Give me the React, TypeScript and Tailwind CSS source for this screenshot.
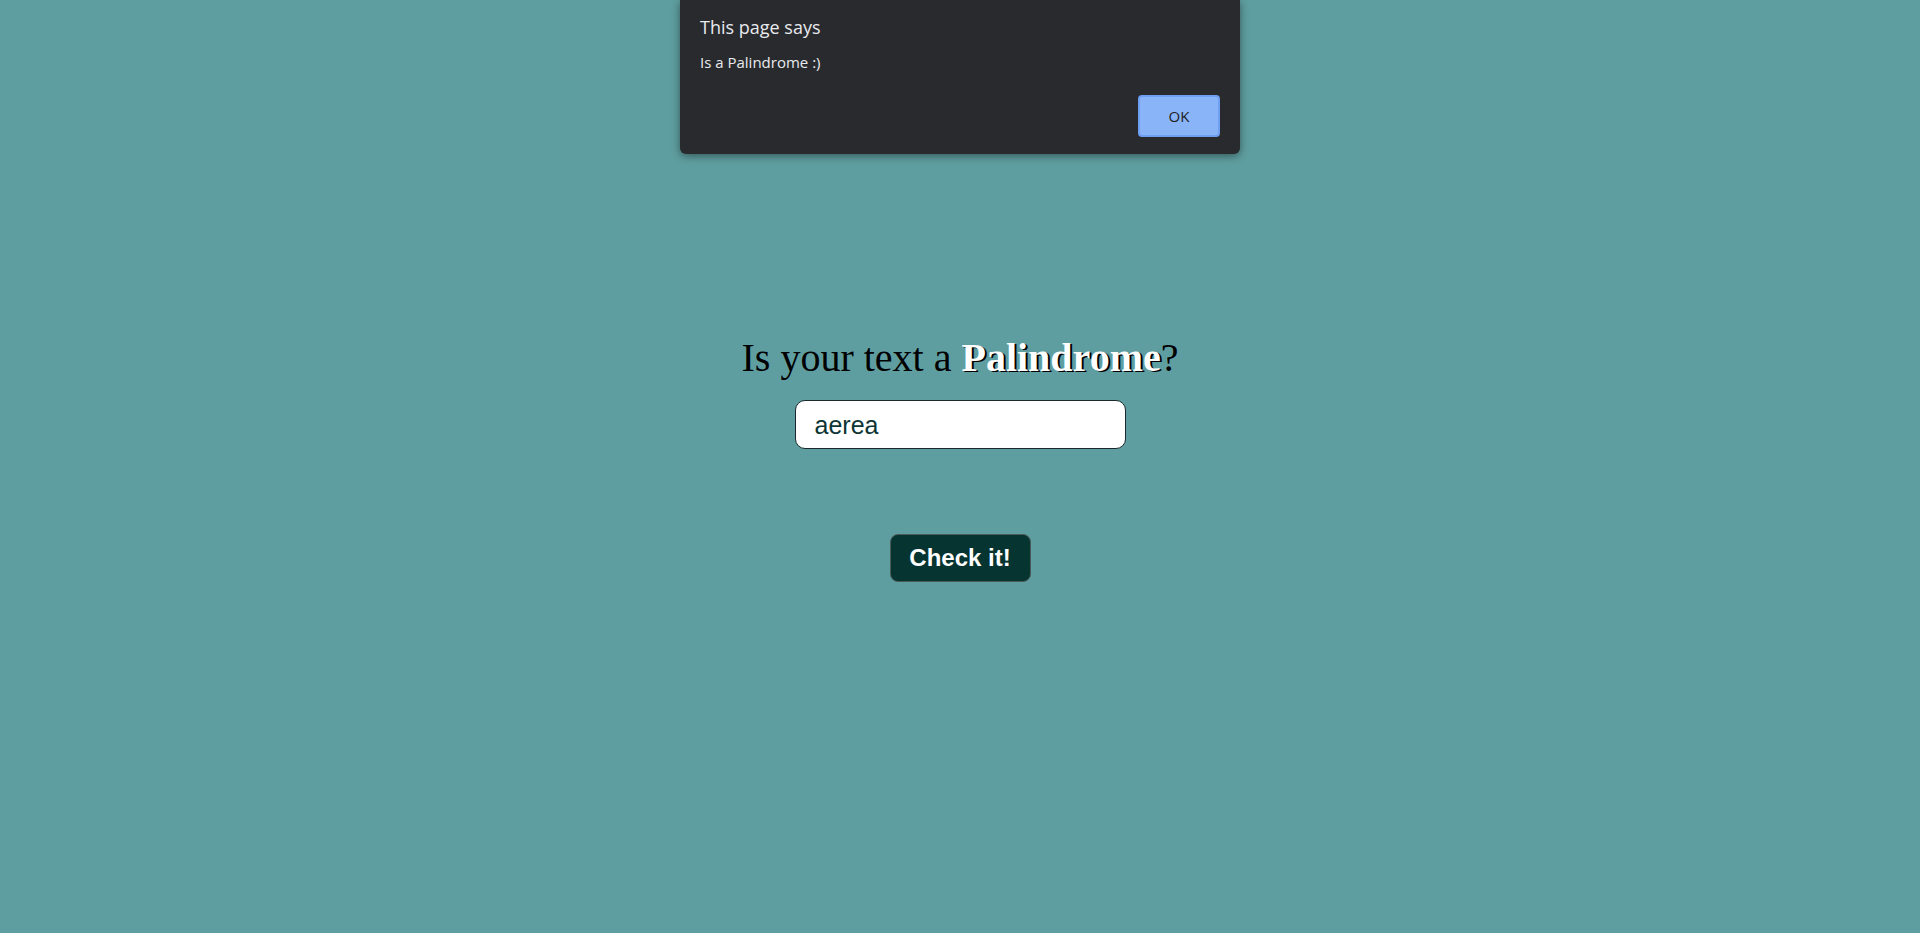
import { useState } from 'react';

export default function App() {
  const [text, setText] = useState('aerea');
  const [showAlert, setShowAlert] = useState(true);

  return (
    <div className="relative min-h-screen w-full bg-[#5f9ea0] flex flex-col items-center pt-[334px]">
      {/* 제목 */}
      <h1 className="text-[40px] leading-[48px] text-black font-normal font-['Liberation_Serif','Times_New_Roman',serif]">
        Is your text a{' '}
        <span className="font-bold text-white [text-shadow:2px_1px_0_#000]">Palindrome</span>?
      </h1>

      {/* 입력 */}
      <input
        value={text}
        onChange={(e) => setText(e.target.value)}
        className="mt-[18px] h-[49px] w-[331px] rounded-[10px] border border-[#1a2a2a] bg-white px-[19px] pt-[2px] text-[25px] text-[#0d3535] outline-none font-['Liberation_Sans',Arial,sans-serif]"
      />

      {/* 버튼 */}
      <button
        onClick={() => setShowAlert(true)}
        className="mt-[85px] h-[48px] w-[141px] rounded-[8px] border border-[#4a5a58] bg-[#063430] text-[24px] font-bold text-white font-['Liberation_Sans',Arial,sans-serif]"
      >
        Check it!
      </button>

      {/* 알림 대화상자 */}
      {showAlert && (
        <div className="absolute inset-x-0 top-0 flex justify-center">
          <div className="h-[154px] w-[560px] rounded-b-[6px] bg-[#292a2d] px-[20px] pt-[14px] shadow-[0_2px_8px_rgba(0,0,0,0.45)] font-['Open_Sans','Noto_Sans',sans-serif]">
            <div className="text-[18px] leading-[26px] text-[#e8eaed]">This page says</div>
            <div className="mt-[12px] text-[15px] leading-[20px] text-[#e8eaed]">Is a Palindrome :)</div>
            <div className="mt-[23px] flex justify-end">
              <button
                onClick={() => setShowAlert(false)}
                className="h-[42px] w-[82px] rounded-[4px] border-2 border-[#6f9ff2] bg-[#8ab4f8] text-[15px] text-[#202124]"
              >
                OK
              </button>
            </div>
          </div>
        </div>
      )}
    </div>
  );
}
